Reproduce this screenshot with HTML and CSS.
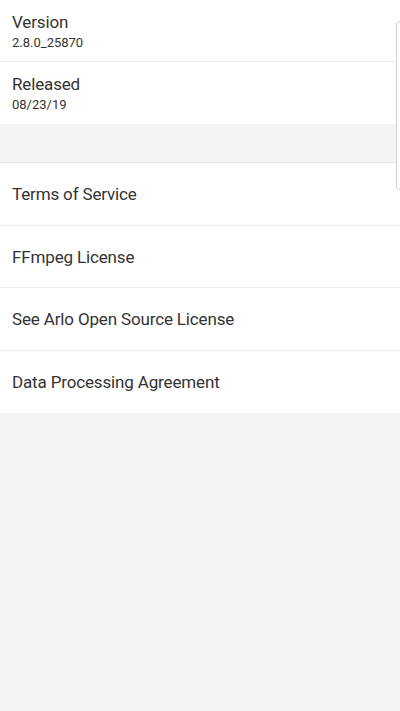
FILE: index.html
```html
<!DOCTYPE html>
<html>
<head>
<meta charset="utf-8">
<link rel="stylesheet" href="styles.css">
</head>
<body>
<div class="screen">
  <section class="group">
    <div class="row info">
      <div class="title">Version</div>
      <div class="sub">2.8.0_25870</div>
    </div>
    <div class="row info last">
      <div class="title">Released</div>
      <div class="sub">08/23/19</div>
    </div>
  </section>
  <div class="spacer"></div>
  <section class="group links">
    <div class="row link">Terms of Service</div>
    <div class="row link">FFmpeg License</div>
    <div class="row link">See Arlo Open Source License</div>
    <div class="row link last">Data Processing Agreement</div>
  </section>
  <div class="edge-handle"></div>
</div>
</body>
</html>
```
FILE: styles.css
```css
* { box-sizing: border-box; }
html, body {
  margin: 0;
  padding: 0;
  background: #f4f4f4;
}
body {
  font-family: Roboto, "Open Sans", sans-serif;
  color: #333;
}
.screen {
  position: relative;
  width: 400px;
  height: 711px;
  background: #f4f4f4;
  overflow: hidden;
}
.group {
  background: #fff;
  display: flex;
  flex-direction: column;
}
.row {
  border-bottom: 1px solid #ececec;
  padding: 0 12px;
}
.row.last { border-bottom: none; }
.info {
  height: 62px;
  display: flex;
  flex-direction: column;
  padding-top: 11px;
}
.title {
  font-size: 17px;
  line-height: 22px;
  letter-spacing: -0.15px;
}
.sub {
  font-size: 13px;
  line-height: 16px;
  margin-top: 1.5px;
}
.spacer {
  height: 39px;
  border-bottom: 1px solid #e6e6e6;
}
.link {
  height: 62.5px;
  display: flex;
  align-items: center;
  padding-top: 1px;
  font-size: 17px;
  letter-spacing: -0.15px;
}
.edge-handle {
  position: absolute;
  right: -4px;
  top: 21px;
  width: 8px;
  height: 169px;
  border: 1px solid #d4d4d4;
  border-radius: 4px;
  background: #fff;
}
```
